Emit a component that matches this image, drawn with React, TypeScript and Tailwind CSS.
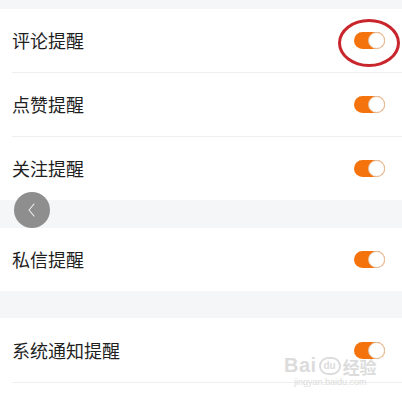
import React from 'react';

const Toggle = ({ marked = false }: { marked?: boolean }) => (
  <div className="relative w-[31px] h-[17px]">
    <div className="w-full h-full rounded-full bg-[#f5730c]"></div>
    <div className="absolute right-0 top-0 w-[17px] h-[17px] rounded-full bg-white border border-[#e3c2a4]"></div>
    {marked && (
      <div className="absolute left-[-16px] top-[-13px] w-[62px] h-[48px] rounded-[50%] border-[3px] border-[#c8262c]"></div>
    )}
  </div>
);

const Row = ({ label, marked, h = 'h-[63px]' }: { label: string; marked?: boolean; h?: string }) => (
  <div className={`${h} flex items-center justify-between pl-3 pr-[17px] bg-white`}>
    <span className="text-[18px] text-[#1f1f1f]">{label}</span>
    <Toggle marked={marked} />
  </div>
);

const Divider = () => (
  <div className="bg-white">
    <div className="ml-3 h-px bg-[#efefef]"></div>
  </div>
);

export default function App() {
  return (
    <div
      className="relative w-[402px] h-[401px] overflow-hidden bg-white"
      style={{ fontFamily: '"Noto Sans CJK SC", "Noto Sans", sans-serif' }}
    >
      <div className="h-[9px] bg-[#f5f6f8]"></div>
      <Row label="评论提醒" marked />
      <Divider />
      <Row label="点赞提醒" />
      <Divider />
      <Row label="关注提醒" />
      <div className="h-[28px] bg-[#f5f6f8]"></div>
      <Row label="私信提醒" />
      <div className="h-[27px] bg-[#f5f6f8]"></div>
      <Row label="系统通知提醒" h="h-[64px]" />
      <Divider />

      {/* floating back button */}
      <div className="absolute left-[14px] top-[192px] w-9 h-9 rounded-full bg-[#8e8e8e] flex items-center justify-center">
        <svg width="12" height="16" viewBox="0 0 12 16" fill="none">
          <path d="M8 2 L3 8 L8 14" stroke="#f2f2f2" strokeWidth="1.1" strokeLinecap="round" strokeLinejoin="round" />
        </svg>
      </div>

      {/* watermark */}
      <div className="absolute left-[284px] top-[355px] flex flex-col items-center text-[#dcdcdc] leading-none">
        <div className="flex items-end gap-[2px]">
          <span className="text-[20px] font-bold tracking-wide" style={{ fontFamily: '"Liberation Sans", sans-serif' }}>Bai</span>
          <span className="w-[22px] h-[18px] rounded-full border-2 border-[#dcdcdc] text-[10px] flex items-center justify-center font-bold" style={{ fontFamily: '"Liberation Sans", sans-serif' }}>du</span>
          <span className="text-[17px] font-bold">经验</span>
        </div>
        <span className="mt-[3px] text-[9px]" style={{ fontFamily: '"Liberation Sans", sans-serif' }}>jingyan.baidu.com</span>
      </div>
    </div>
  );
}
